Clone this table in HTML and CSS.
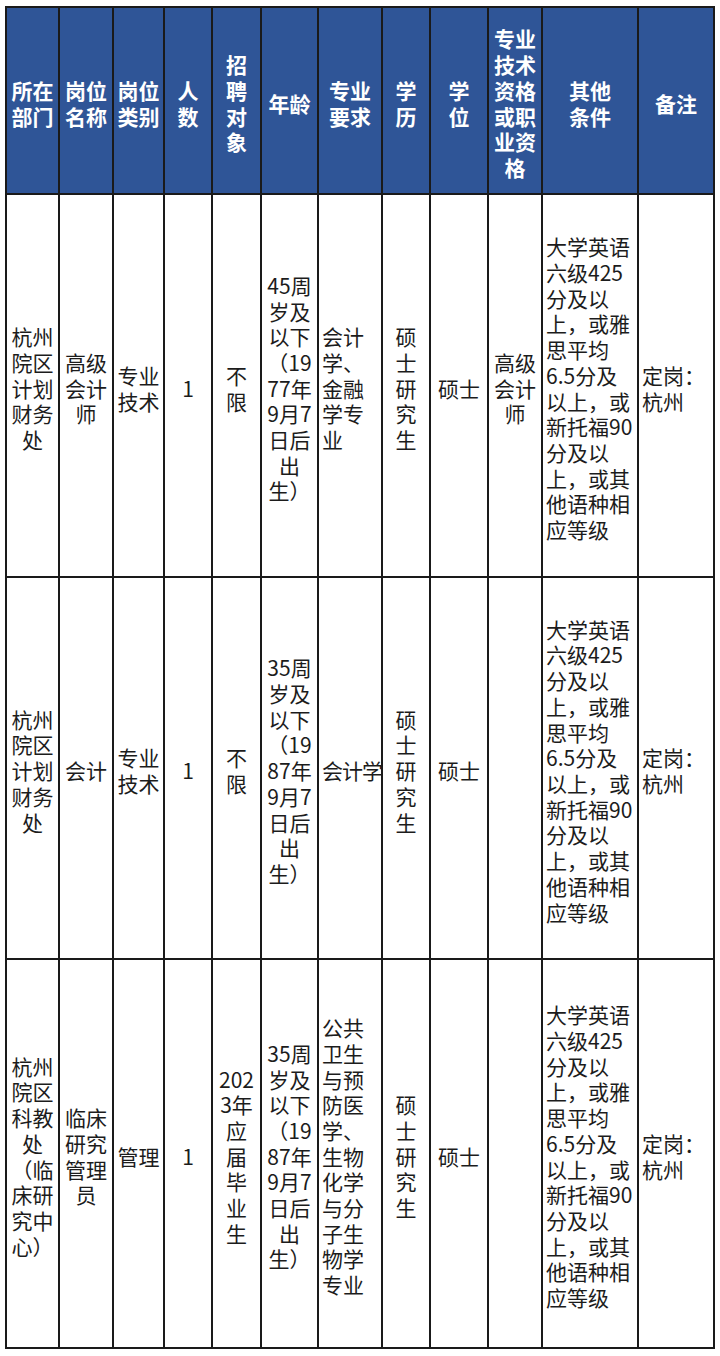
FILE: index.html
```html
<!DOCTYPE html>
<html lang="zh-CN">
<head>
<meta charset="utf-8">
<title>招聘岗位表</title>
<link rel="stylesheet" href="styles.css">
</head>
<body>
<div class="sheet">
  <div class="cell head"><div class="txt">所在<br>部门</div></div>
  <div class="cell head"><div class="txt">岗位<br>名称</div></div>
  <div class="cell head"><div class="txt">岗位<br>类别</div></div>
  <div class="cell head"><div class="txt">人<br>数</div></div>
  <div class="cell head"><div class="txt">招<br>聘<br>对<br>象</div></div>
  <div class="cell head"><div class="txt">年龄</div></div>
  <div class="cell head"><div class="txt">专业<br>要求</div></div>
  <div class="cell head"><div class="txt">学<br>历</div></div>
  <div class="cell head"><div class="txt">学<br>位</div></div>
  <div class="cell head"><div class="txt">专业<br>技术<br>资格<br>或职<br>业资<br>格</div></div>
  <div class="cell head"><div class="txt">其他<br>条件</div></div>
  <div class="cell head"><div class="txt">备注</div></div>

  <div class="cell"><div class="txt">杭州<br>院区<br>计划<br>财务<br>处</div></div>
  <div class="cell"><div class="txt">高级<br>会计<br>师</div></div>
  <div class="cell"><div class="txt">专业<br>技术</div></div>
  <div class="cell"><div class="txt">1</div></div>
  <div class="cell"><div class="txt">不<br>限</div></div>
  <div class="cell"><div class="txt">45周<br>岁及<br>以下<br>（19<br>77年<br>9月7<br>日后<br>出<br>生）</div></div>
  <div class="cell left"><div class="txt">会计<br>学、<br>金融<br>学专<br>业</div></div>
  <div class="cell"><div class="txt">硕<br>士<br>研<br>究<br>生</div></div>
  <div class="cell"><div class="txt">硕士</div></div>
  <div class="cell"><div class="txt">高级<br>会计<br>师</div></div>
  <div class="cell left"><div class="txt">大学英语<br>六级425<br>分及以<br>上，或雅<br>思平均<br>6.5分及<br>以上，或<br>新托福90<br>分及以<br>上，或其<br>他语种相<br>应等级</div></div>
  <div class="cell left"><div class="txt">定岗：<br>杭州</div></div>

  <div class="cell"><div class="txt">杭州<br>院区<br>计划<br>财务<br>处</div></div>
  <div class="cell"><div class="txt">会计</div></div>
  <div class="cell"><div class="txt">专业<br>技术</div></div>
  <div class="cell"><div class="txt">1</div></div>
  <div class="cell"><div class="txt">不<br>限</div></div>
  <div class="cell"><div class="txt">35周<br>岁及<br>以下<br>（19<br>87年<br>9月7<br>日后<br>出<br>生）</div></div>
  <div class="cell left"><div class="txt tight">会计学</div></div>
  <div class="cell"><div class="txt">硕<br>士<br>研<br>究<br>生</div></div>
  <div class="cell"><div class="txt">硕士</div></div>
  <div class="cell"><div class="txt"></div></div>
  <div class="cell left"><div class="txt">大学英语<br>六级425<br>分及以<br>上，或雅<br>思平均<br>6.5分及<br>以上，或<br>新托福90<br>分及以<br>上，或其<br>他语种相<br>应等级</div></div>
  <div class="cell left"><div class="txt">定岗：<br>杭州</div></div>

  <div class="cell"><div class="txt">杭州<br>院区<br>科教<br>处<br>（临<br>床研<br>究中<br>心）</div></div>
  <div class="cell"><div class="txt">临床<br>研究<br>管理<br>员</div></div>
  <div class="cell"><div class="txt">管理</div></div>
  <div class="cell"><div class="txt">1</div></div>
  <div class="cell"><div class="txt">202<br>3年<br>应<br>届<br>毕<br>业<br>生</div></div>
  <div class="cell"><div class="txt">35周<br>岁及<br>以下<br>（19<br>87年<br>9月7<br>日后<br>出<br>生）</div></div>
  <div class="cell left"><div class="txt">公共<br>卫生<br>与预<br>防医<br>学、<br>生物<br>化学<br>与分<br>子生<br>物学<br>专业</div></div>
  <div class="cell"><div class="txt">硕<br>士<br>研<br>究<br>生</div></div>
  <div class="cell"><div class="txt">硕士</div></div>
  <div class="cell"><div class="txt"></div></div>
  <div class="cell left"><div class="txt">大学英语<br>六级425<br>分及以<br>上，或雅<br>思平均<br>6.5分及<br>以上，或<br>新托福90<br>分及以<br>上，或其<br>他语种相<br>应等级</div></div>
  <div class="cell left"><div class="txt">定岗：<br>杭州</div></div>
</div>
</body>
</html>
```
FILE: styles.css
```css
html, body {
  margin: 0;
  padding: 0;
  background: #ffffff;
}

body {
  font-family: "Noto Sans CJK SC", "Noto Sans", sans-serif;
  font-size: 21px;
  line-height: 25.7px;
  color: #1c1c1c;
}

.sheet {
  display: grid;
  grid-template-columns: 53px 54px 51px 48px 49px 57px 64px 48px 58px 54px 96px 76px;
  grid-template-rows: 187px 383px 382px 389px;
  width: max-content;
  margin: 6px 0 0 5px;
  border-left: 2px solid #1a1a1a;
  border-top: 2px solid #1a1a1a;
}

.cell {
  box-sizing: border-box;
  padding-top: 6px;
  border-right: 2px solid #1a1a1a;
  border-bottom: 2px solid #1a1a1a;
  display: flex;
  align-items: center;
  justify-content: center;
  text-align: center;
  overflow: visible;
}

.cell.head {
  background: #2f5597;
  color: #ffffff;
  font-weight: 700;
}

.cell.left {
  justify-content: flex-start;
  text-align: left;
  padding-left: 3px;
}

.txt {
  white-space: nowrap;
}

.txt.tight {
  letter-spacing: -1px;
}
```
